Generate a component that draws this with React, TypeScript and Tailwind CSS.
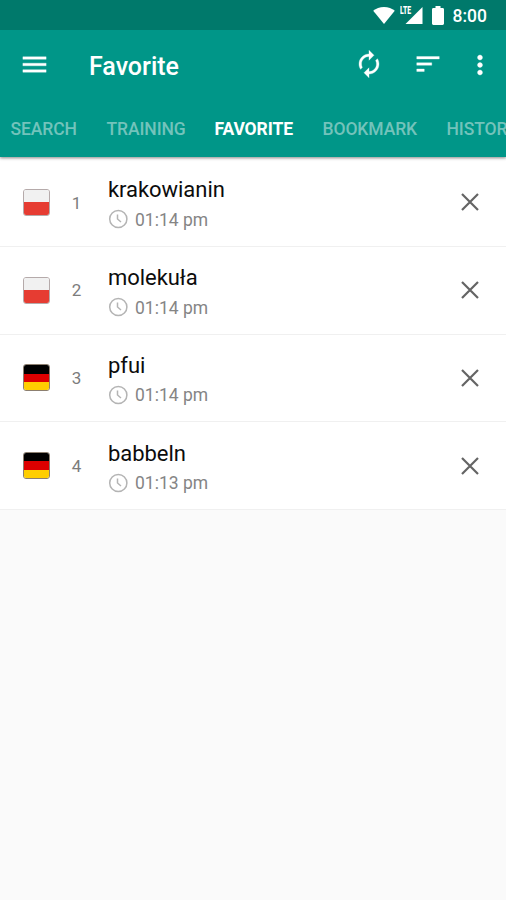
import { useState } from 'react';

type Country = 'PL' | 'DE';

type Favorite = {
  id: number;
  word: string;
  time: string;
  country: Country;
};

const TABS = [
  { label: 'SEARCH', width: 'w-[66px]' },
  { label: 'TRAINING', width: 'w-[78px]' },
  { label: 'FAVORITE', width: 'w-[78px]' },
  { label: 'BOOKMARK', width: 'w-[94px]' },
  { label: 'HISTORY', width: 'w-[76px]' },
];

const INITIAL_FAVORITES: Favorite[] = [
  { id: 1, word: 'krakowianin', time: '01:14 pm', country: 'PL' },
  { id: 2, word: 'molekuła', time: '01:14 pm', country: 'PL' },
  { id: 3, word: 'pfui', time: '01:14 pm', country: 'DE' },
  { id: 4, word: 'babbeln', time: '01:13 pm', country: 'DE' },
];

function Icon({ path, className }: { path: string; className: string }) {
  return (
    <svg viewBox="0 0 24 24" fill="currentColor" stroke="currentColor" strokeWidth="0.25" className={`shrink-0 ${className}`}>
      <path d={path} />
    </svg>
  );
}

function StatusBar() {
  return (
    <div className="flex h-[30px] items-center bg-[#00796b] pl-[373px] text-white">
      <svg viewBox="0 0 22 17" fill="currentColor" className="h-[17px] w-[22px] shrink-0">
        <path d="M11 17 0.2 3.7C3 1.5 6.8 0 11 0s8 1.5 10.8 3.7z" />
      </svg>
      <div className="ml-[5px] flex h-[20px] w-[24px] shrink-0">
        <span className="-mt-px w-[10px] origin-left scale-x-[0.65] text-[10.5px] font-black leading-[13px]">LTE</span>
        <svg viewBox="0 0 18 20" fill="currentColor" className="-ml-[5px] h-[20px] w-[18px] shrink-0">
          <path d="M17.500 2V19H0.5z" />
        </svg>
      </div>
      <svg viewBox="0 0 12 19" fill="currentColor" className="ml-[8px] h-[19px] w-[12px] shrink-0">
        <path d="M3.500 0h5v2h2.100c.8 0 1.400.6 1.400 1.400v14.200c0 .8-.6 1.400-1.400 1.400H1.400C.6 19 0 18.400 0 17.600V3.400C0 2.600.6 2 1.400 2h2.100z" />
      </svg>
      <span className="ml-[8.5px] mt-[2px] whitespace-nowrap text-[17.5px] font-medium leading-5">8:00</span>
    </div>
  );
}

function Flag({ country }: { country: Country }) {
  if (country === 'PL') {
    return (
      <div className="flex h-[27px] w-[27px] shrink-0 flex-col overflow-hidden rounded-[3px] border border-[#b5aaaa]">
        <div className="flex-1 bg-[#f1f1f1]" />
        <div className="flex-1 bg-[#e63c32]" />
      </div>
    );
  }

  return (
    <div className="flex h-[27px] w-[27px] shrink-0 flex-col overflow-hidden rounded-[3px] border border-[#8c7f70]">
      <div className="flex-1 bg-black" />
      <div className="flex-1 bg-[#dd0000]" />
      <div className="flex-1 bg-[#ffce00]" />
    </div>
  );
}

function FavoriteRow({ item, onRemove }: { item: Favorite; onRemove: (id: number) => void }) {
  return (
    <li className="flex h-[87.75px] items-center border-b border-[#f0f0f0] bg-white pl-[23px] pr-[21px]">
      <Flag country={item.country} />
      <span className="ml-[16.5px] mt-[2px] w-[20px] text-center text-[17px] text-[#7c7c7c]">{item.id}</span>
      <div className="ml-[21.5px] flex-1 pt-[4px]">
        <p className="text-[22px] leading-[30px] tracking-[-0.05px] text-[#0c0c0c]">{item.word}</p>
        <div className="flex h-[28px] items-center">
          <svg viewBox="0 0 20 20" fill="none" stroke="#b4b4b4" strokeWidth="1.5" className="h-[20px] w-[20px]">
            <circle cx="10.300" cy="10" r="8.600" />
            <path d="M9.500 5.500v4.500l3.500 3" />
          </svg>
          <span className="ml-[7px] mt-px text-[17.5px] text-[#858585]">{item.time}</span>
        </div>
      </div>
      <button aria-label={`Remove ${item.word}`} className="text-[#646464]" onClick={() => onRemove(item.id)}>
        <svg viewBox="0 0 30 30" fill="none" stroke="currentColor" strokeWidth="2.2" className="h-[30px] w-[30px]">
          <path d="M7 7l16 16M23 7L7 23" />
        </svg>
      </button>
    </li>
  );
}

function App() {
  const [activeTab, setActiveTab] = useState('FAVORITE');
  const [favorites, setFavorites] = useState(INITIAL_FAVORITES);

  const handleRemove = (id: number) => {
    setFavorites((current) => current.filter((item) => item.id !== id));
  };

  return (
    <div className="flex h-[900px] w-[506px] flex-col overflow-hidden bg-[#fafafa] font-[Roboto,sans-serif]">
      <header className="relative h-[157px] shrink-0 bg-[#009688] text-white shadow-[0_1px_3px_rgba(0,0,0,0.45)]">
        <StatusBar />
        <div className="flex h-[70px] items-center pl-[19px] pr-[11.5px]">
          <button aria-label="Menu" className="-mt-px">
            <Icon path="M3 18h18v-2H3v2zm0-5h18v-2H3v2zm0-7v2h18V6H3z" className="h-[31px] w-[31px]" />
          </button>
          <h1 className="ml-[39px] mt-[3px] flex-1 text-[25px] font-medium">Favorite</h1>
          <button aria-label="Sync" className="-mt-[2px]">
            <Icon
              path="M12 6v3l4-4-4-4v3c-4.420 0-8 3.580-8 8 0 1.570.46 3.030 1.240 4.260L6.700 14.800c-.45-.83-.7-1.790-.7-2.800 0-3.310 2.690-6 6-6zm6.760 1.740L17.300 9.200c.44.84.7 1.790.7 2.800 0 3.310-2.690 6-6 6v-3l-4 4 4 4v-3c4.420 0 8-3.580 8-8 0-1.570-.46-3.030-1.240-4.260z"
              className="h-[30px] w-[30px]"
            />
          </button>
          <button aria-label="Sort" className="ml-[29px] -mt-[2px]">
            <Icon path="M3 18h6v-2H3v2zM3 6v2h18V6H3zm0 7h12v-2H3v2z" className="h-[30px] w-[30px]" />
          </button>
          <button aria-label="More" className="ml-[22px] -mt-px">
            <Icon
              path="M12 8c1.100 0 2-.9 2-2s-.9-2-2-2-2 .9-2 2 .9 2 2 2zm0 2c-1.100 0-2 .9-2 2s.9 2 2 2 2-.9 2-2-.9-2-2-2zm0 6c-1.100 0-2 .9-2 2s.9 2 2 2 2-.9 2-2-.9-2-2-2z"
              className="h-[30px] w-[30px]"
            />
          </button>
        </div>
        <nav className="flex h-[57px] items-center gap-[30px] overflow-hidden pl-[10.5px] pt-[2px]">
          {TABS.map((tab) => (
            <button
              key={tab.label}
              className={`shrink-0 whitespace-nowrap text-left text-[17.5px] tracking-[-0.1px] ${tab.width} ${
                activeTab === tab.label ? 'font-bold text-white' : 'font-medium text-[#73c3bb]'
              }`}
              onClick={() => setActiveTab(tab.label)}
            >
              {tab.label}
            </button>
          ))}
        </nav>
      </header>

      <ul className="pt-[2px]">
        {favorites.map((item) => (
          <FavoriteRow key={item.id} item={item} onRemove={handleRemove} />
        ))}
      </ul>
    </div>
  );
}

export default App;
